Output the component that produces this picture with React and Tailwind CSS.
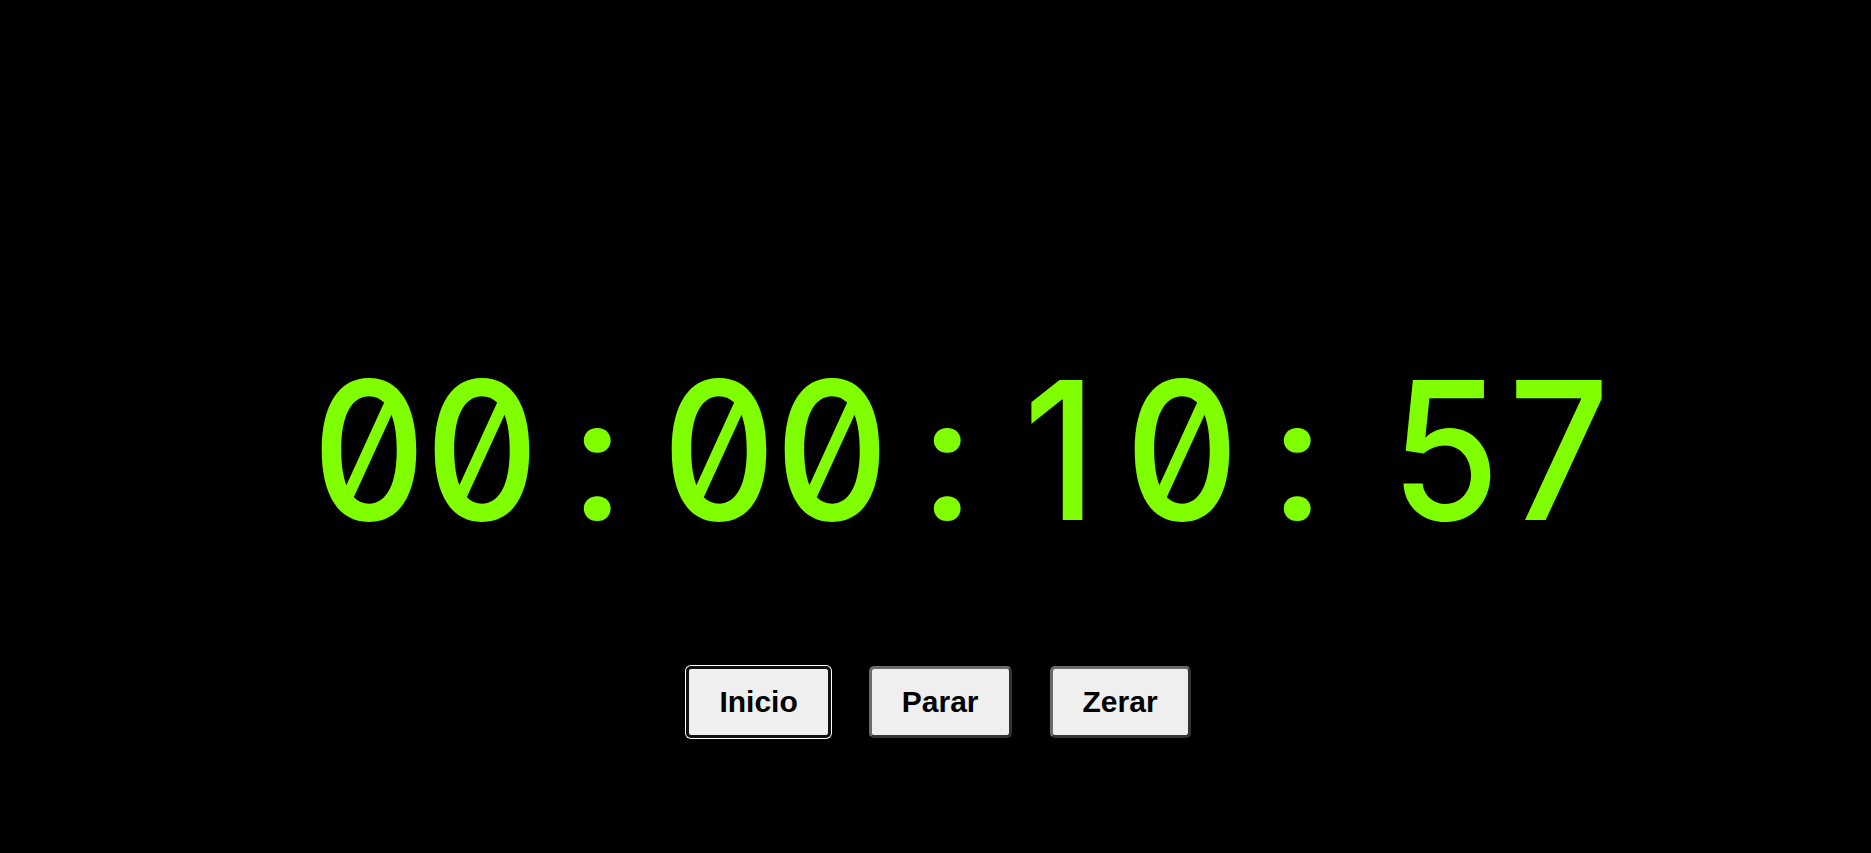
import React from "react";

const Digit = ({ c, extra = "" }) => (
  <span
    className={`w-[113px] flex justify-center ${extra}`}
    style={{ fontFamily: "Inter, sans-serif", fontFeatureSettings: '"zero" 1' }}
  >
    <span className="inline-block font-medium scale-x-[0.92]">{c}</span>
  </span>
);

const Colon = () => (
  <span
    className="w-[119px] text-center font-bold text-[168px] leading-none"
    style={{ fontFamily: "Roboto, sans-serif" }}
  >
    :
  </span>
);

export default function App() {
  return (
    <div className="min-h-screen w-full bg-black flex flex-col items-center pt-[354px]">
      <div className="flex items-baseline pl-[56px] text-[192px] leading-none text-[#7fff00] whitespace-nowrap">
        <Digit c="0" />
        <Digit c="0" />
        <Colon />
        <Digit c="0" extra="ml-[5px]" />
        <Digit c="0" />
        <Colon />
        <Digit c="1" extra="ml-[5px] pr-[18px]" />
        <Digit c="0" />
        <Colon />
        <Digit c="5" extra="ml-[32px]" />
        <Digit c="7" />
      </div>
      <div
        className="mt-[119px] ml-[6px] flex gap-[38px]"
        style={{ fontFamily: '"Liberation Sans", Arial, sans-serif' }}
      >
        <button className="bg-[#efefef] text-black font-bold text-[30px] leading-[34px] px-[30px] py-[16px] rounded-[5px] border-[3px] border-[#101010] shadow-[0_0_0_1px_#ffffff]">
          Inicio
        </button>
        <button className="bg-[#efefef] text-black font-bold text-[30px] leading-[34px] px-[30px] py-[16px] rounded-[5px] border-[3px] border-t-[#6b6b6b] border-l-[#6b6b6b] border-r-[#333333] border-b-[#333333]">
          Parar
        </button>
        <button className="bg-[#efefef] text-black font-bold text-[30px] leading-[34px] px-[30px] py-[16px] rounded-[5px] border-[3px] border-t-[#6b6b6b] border-l-[#6b6b6b] border-r-[#333333] border-b-[#333333]">
          Zerar
        </button>
      </div>
    </div>
  );
}
